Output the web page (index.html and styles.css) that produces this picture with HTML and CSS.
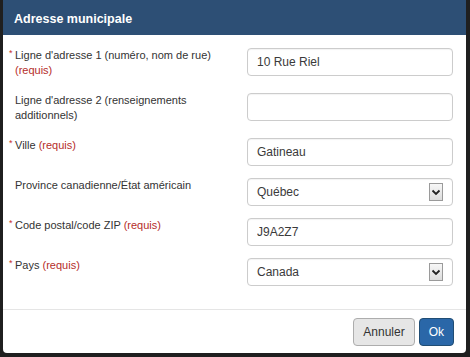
FILE: index.html
```html
<!DOCTYPE html>
<html lang="fr">
<head>
    <meta charset="UTF-8">
    <meta name="viewport" content="width=device-width, initial-scale=1.0">
    <title>Adresse municipale</title>
    <link rel="stylesheet" href="styles.css">
</head>
<body>

<div class="modal">
    <div class="modal-header">
        <h4>Adresse municipale</h4>
    </div>

    <form class="modal-body">
        <div class="row">
            <label class="req">Ligne d'adresse 1 (numéro, nom de rue) <span class="requis">(requis)</span></label>
            <input class="field" type="text" value="10 Rue Riel">
        </div>
        <div class="row">
            <label>Ligne d'adresse 2 (renseignements additionnels)</label>
            <input class="field" type="text" value="">
        </div>
        <div class="row">
            <label class="req">Ville <span class="requis">(requis)</span></label>
            <input class="field" type="text" value="Gatineau">
        </div>
        <div class="row">
            <label>Province canadienne/État américain</label>
            <div class="field select">
                <span>Québec</span>
                <span class="arrow">
                    <svg width="10" height="7" viewBox="0 0 10 7"><path d="M1.5 1.5 L5 5 L8.5 1.5" fill="none" stroke="#222" stroke-width="1.8"/></svg>
                </span>
            </div>
        </div>
        <div class="row">
            <label class="req">Code postal/code ZIP <span class="requis">(requis)</span></label>
            <input class="field" type="text" value="J9A2Z7">
        </div>
        <div class="row">
            <label class="req">Pays <span class="requis">(requis)</span></label>
            <div class="field select">
                <span>Canada</span>
                <span class="arrow">
                    <svg width="10" height="7" viewBox="0 0 10 7"><path d="M1.5 1.5 L5 5 L8.5 1.5" fill="none" stroke="#222" stroke-width="1.8"/></svg>
                </span>
            </div>
        </div>
    </form>

    <div class="modal-footer">
        <button class="btn btn-default" type="button">Annuler</button>
        <button class="btn btn-primary" type="button">Ok</button>
    </div>
</div>

</body>
</html>
```

FILE: styles.css
```css
html, body {
    height: 100%;
}
body {
    margin: 0;
    padding: 0 4px 4px 3px;
    box-sizing: border-box;
    background-color: #1f1f1f;
    font-family: "Liberation Sans", Arial, sans-serif;
    color: #333;
    overflow: hidden;
}
.modal {
    height: 100%;
    background-color: #fff;
    border-radius: 0 0 4px 4px;
    overflow: hidden;
    display: flex;
    flex-direction: column;
}
.modal-header {
    height: 36px;
    box-sizing: border-box;
    padding: 3px 11px 0;
    background-color: #2d4f75;
    display: flex;
    align-items: center;
}
.modal-header h4 {
    margin: 0;
    font-size: 12.5px;
    font-weight: bold;
    color: #fff;
}
.modal-body {
    margin: 0;
    padding: 13px 13px 11px 12px;
    flex: 1;
}
.row {
    display: grid;
    grid-template-columns: 1fr 206px;
    column-gap: 20px;
    align-items: start;
    margin-bottom: 12px;
}
.row label {
    font-size: 11px;
    line-height: 15px;
    padding-bottom: 3px;
}
.req::before {
    content: "*";
    display: inline-block;
    width: 6px;
    margin-left: -6px;
    color: #c9302c;
    font-size: 9px;
    vertical-align: top;
    line-height: 11px;
}
.requis {
    color: #b52d2a;
}
.field {
    box-sizing: border-box;
    height: 28px;
    width: 206px;
    margin: 0;
    padding: 0 9px;
    border: 1px solid #ccc;
    border-radius: 4px;
    background-color: #fff;
    font-family: "Liberation Sans", Arial, sans-serif;
    font-size: 12px;
    color: #3a3a3a;
    box-shadow: inset 0 1px 1px rgba(0, 0, 0, 0.05);
}
.select {
    display: flex;
    align-items: center;
    justify-content: space-between;
}
.arrow {
    box-sizing: border-box;
    width: 14px;
    height: 18px;
    border: 1px solid #9a9a9a;
    background: linear-gradient(#f7f7f7, #dcdcdc);
    display: flex;
    align-items: center;
    justify-content: center;
}
.modal-footer {
    border-top: 1px solid #e5e5e5;
    padding: 8px 12px 7px;
    display: flex;
    justify-content: flex-end;
    gap: 4px;
}
.btn {
    height: 28px;
    padding: 0 9px;
    border: 1px solid #adadad;
    border-radius: 4px;
    font-family: "Liberation Sans", Arial, sans-serif;
    font-size: 12px;
}
.btn-default {
    background-color: #e6e6e6;
    color: #333;
}
.btn-primary {
    background-color: #2a67a8;
    border-color: #204d74;
    color: #fff;
}
```
